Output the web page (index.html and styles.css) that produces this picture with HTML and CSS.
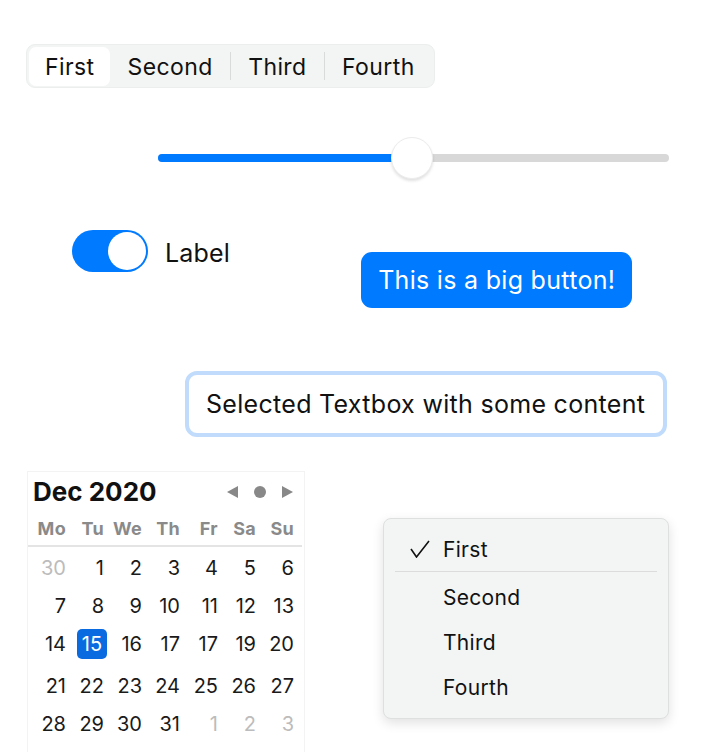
FILE: index.html
```html
<!DOCTYPE html>
<html lang="en">
<head>
<meta charset="utf-8">
<title>Controls</title>
<link rel="stylesheet" href="styles.css">
</head>
<body>
<div class="page">
  <div class="segmented">
    <span class="seg seg-active">First</span>
    <span class="seg">Second</span>
    <span class="seg-div"></span>
    <span class="seg">Third</span>
    <span class="seg-div"></span>
    <span class="seg">Fourth</span>
  </div>

  <div class="slider">
    <div class="track"><div class="fill" style="width:253px"></div></div>
    <div class="thumb" style="left:233px"></div>
  </div>

  <div class="row-mid">
    <div class="toggle-group">
      <div class="toggle"><div class="knob"></div></div>
      <span class="toggle-label">Label</span>
    </div>
    <button class="big-button">This is a big button!</button>
  </div>

  <div class="textbox">Selected Textbox with some content</div>

  <div class="row-bottom">
    <div class="calendar">
      <div class="cal-header">
        <span class="cal-title">Dec 2020</span>
        <div class="cal-nav">
          <svg width="12" height="12" viewBox="0 0 12 12"><polygon points="12,0 12,12 1,6" fill="#888"/></svg>
          <svg width="12" height="12" viewBox="0 0 12 12"><circle cx="6" cy="6" r="6" fill="#888"/></svg>
          <svg width="12" height="12" viewBox="0 0 12 12"><polygon points="0,0 0,12 11,6" fill="#888"/></svg>
        </div>
      </div>
      <div class="weekdays">
        <span>Mo</span><span>Tu</span><span>We</span><span>Th</span><span>Fr</span><span>Sa</span><span>Su</span>
      </div>
      <div class="days">
        <div class="week"><span class="muted">30</span><span>1</span><span>2</span><span>3</span><span>4</span><span>5</span><span>6</span></div>
        <div class="week"><span>7</span><span>8</span><span>9</span><span>10</span><span>11</span><span>12</span><span>13</span></div>
        <div class="week week-sel"><span>14</span><span><b class="sel">15</b></span><span>16</span><span>17</span><span>17</span><span>19</span><span>20</span></div>
        <div class="week"><span>21</span><span>22</span><span>23</span><span>24</span><span>25</span><span>26</span><span>27</span></div>
        <div class="week"><span>28</span><span>29</span><span>30</span><span>31</span><span class="muted">1</span><span class="muted">2</span><span class="muted">3</span></div>
      </div>
    </div>

    <div class="menu">
      <div class="menu-item menu-first">
        <svg class="check" width="20" height="18" viewBox="0 0 20 18"><polyline points="1,9 6.5,17 19,1" fill="none" stroke="#111" stroke-width="1.6"/></svg>
        <span>First</span>
      </div>
      <div class="menu-sep"></div>
      <div class="menu-item"><span>Second</span></div>
      <div class="menu-item"><span>Third</span></div>
      <div class="menu-item"><span>Fourth</span></div>
    </div>
  </div>
</div>
</body>
</html>
```
FILE: styles.css
```css
html, body {
  margin: 0;
  padding: 0;
  background: #ffffff;
  overflow: hidden;
}
body {
  font-family: Inter, "Noto Sans", sans-serif;
  color: #111;
}
.page {
  padding-top: 44px;
  display: flex;
  flex-direction: column;
  align-items: flex-start;
}

/* Segmented control */
.segmented {
  margin-left: 26px;
  display: flex;
  align-items: center;
  height: 42px;
  box-sizing: content-box;
  padding: 0 2px;
  border: 1px solid #eceeee;
  background: #f3f4f4;
  border-radius: 9px;
}
.seg {
  height: 39px;
  line-height: 41px;
  padding: 0 17px;
  font-size: 23px;
  letter-spacing: 0.4px;
  color: #111;
}
.seg-active {
  background: #ffffff;
  border-radius: 7px;
  padding: 0 16px;
}
.seg-div {
  width: 1.5px;
  height: 28px;
  background: #d9dada;
}

/* Slider */
.slider {
  position: relative;
  margin-top: 49px;
  margin-left: 158px;
  width: 511px;
  height: 42px;
  display: flex;
  align-items: center;
}
.track {
  flex: 1;
  height: 8px;
  border-radius: 4px;
  background: #d8d8d8;
  display: flex;
  overflow: hidden;
}
.fill {
  background: #007aff;
  height: 100%;
}
.thumb {
  position: absolute;
  top: 0;
  width: 40px;
  height: 40px;
  border-radius: 50%;
  background: #fff;
  border: 1px solid #ececec;
  box-shadow: 0 2px 3px rgba(0,0,0,0.12);
}

/* Toggle + button row */
.row-mid {
  margin-top: 51px;
  display: flex;
  align-items: flex-start;
}
.toggle-group {
  margin-left: 72px;
  display: flex;
  align-items: center;
  gap: 17px;
}
.toggle {
  width: 76px;
  height: 42px;
  box-sizing: border-box;
  padding: 2px;
  border-radius: 21px;
  background: #007aff;
  display: flex;
  justify-content: flex-end;
}
.knob {
  width: 38px;
  height: 38px;
  border-radius: 50%;
  background: #fff;
}
.toggle-label {
  font-size: 25px;
  letter-spacing: 0.2px;
  color: #111;
  padding-top: 3px;
}
.big-button {
  margin-top: 22px;
  margin-left: 131px;
  height: 56px;
  padding: 0 17px;
  border: none;
  border-radius: 11px;
  background: #007aff;
  color: #fff;
  font-family: Inter, "Noto Sans", sans-serif;
  font-size: 25px;
  letter-spacing: 0.3px;
}

/* Textbox */
.textbox {
  margin-top: 63px;
  margin-left: 185px;
  width: 482px;
  height: 66px;
  box-sizing: border-box;
  border: 4px solid #c0dbfb;
  border-radius: 12px;
  padding-left: 17px;
  display: flex;
  align-items: center;
  font-size: 25px;
  letter-spacing: 0.3px;
  color: #111;
}

/* Bottom row */
.row-bottom {
  margin-top: 34px;
  display: flex;
  align-items: flex-start;
}

/* Calendar */
.calendar {
  margin-left: 27px;
  width: 278px;
  height: 300px;
  box-sizing: border-box;
  border: 1px solid #f3f3f3;
  border-bottom: none;
}
.cal-header {
  height: 39px;
  display: flex;
  align-items: center;
  justify-content: space-between;
  padding: 0 10px 0 5px;
}
.cal-title {
  font-size: 26px;
  font-weight: 700;
  color: #111;
}
.cal-nav {
  display: flex;
  align-items: center;
  gap: 16px;
}
.cal-nav svg {
  display: block;
}
.weekdays {
  display: grid;
  grid-template-columns: repeat(7, 38px);
  height: 34px;
  align-items: center;
  border-bottom: 2px solid #e4e4e4;
  margin-right: 2px;
}
.weekdays span {
  text-align: right;
  font-size: 18px;
  font-weight: 700;
  letter-spacing: 0.3px;
  color: #8a8a8a;
}
.days {
  padding-top: 2px;
}
.week {
  display: grid;
  grid-template-columns: repeat(7, 38px);
  height: 38px;
  align-items: center;
}
.week-sel {
  margin-bottom: 4px;
}
.week span {
  text-align: right;
  font-size: 20px;
  color: #1a1a1a;
}
.week .muted {
  color: #bcbcbc;
}
.sel {
  display: inline-block;
  font-weight: 400;
  width: 30px;
  height: 30px;
  line-height: 30px;
  margin-right: -3px;
  text-align: center;
  border-radius: 5px;
  background: #0a6be0;
  color: #fff;
}

/* Menu */
.menu {
  margin-top: 47px;
  margin-left: 78px;
  width: 286px;
  box-sizing: border-box;
  padding: 8px 0;
  background: #f3f4f4;
  border: 1px solid #dedfdf;
  border-radius: 8px;
  box-shadow: 0 4px 12px rgba(0,0,0,0.12);
}
.menu-item {
  height: 45px;
  display: flex;
  align-items: center;
  padding-left: 59px;
  position: relative;
  font-size: 21px;
  letter-spacing: 0.3px;
  color: #111;
}
.menu-first {
  height: 44px;
}
.check {
  position: absolute;
  left: 26px;
  top: 13px;
}
.menu-sep {
  height: 1px;
  background: #dcdcdc;
  margin: 0 11px 3px;
}
```
